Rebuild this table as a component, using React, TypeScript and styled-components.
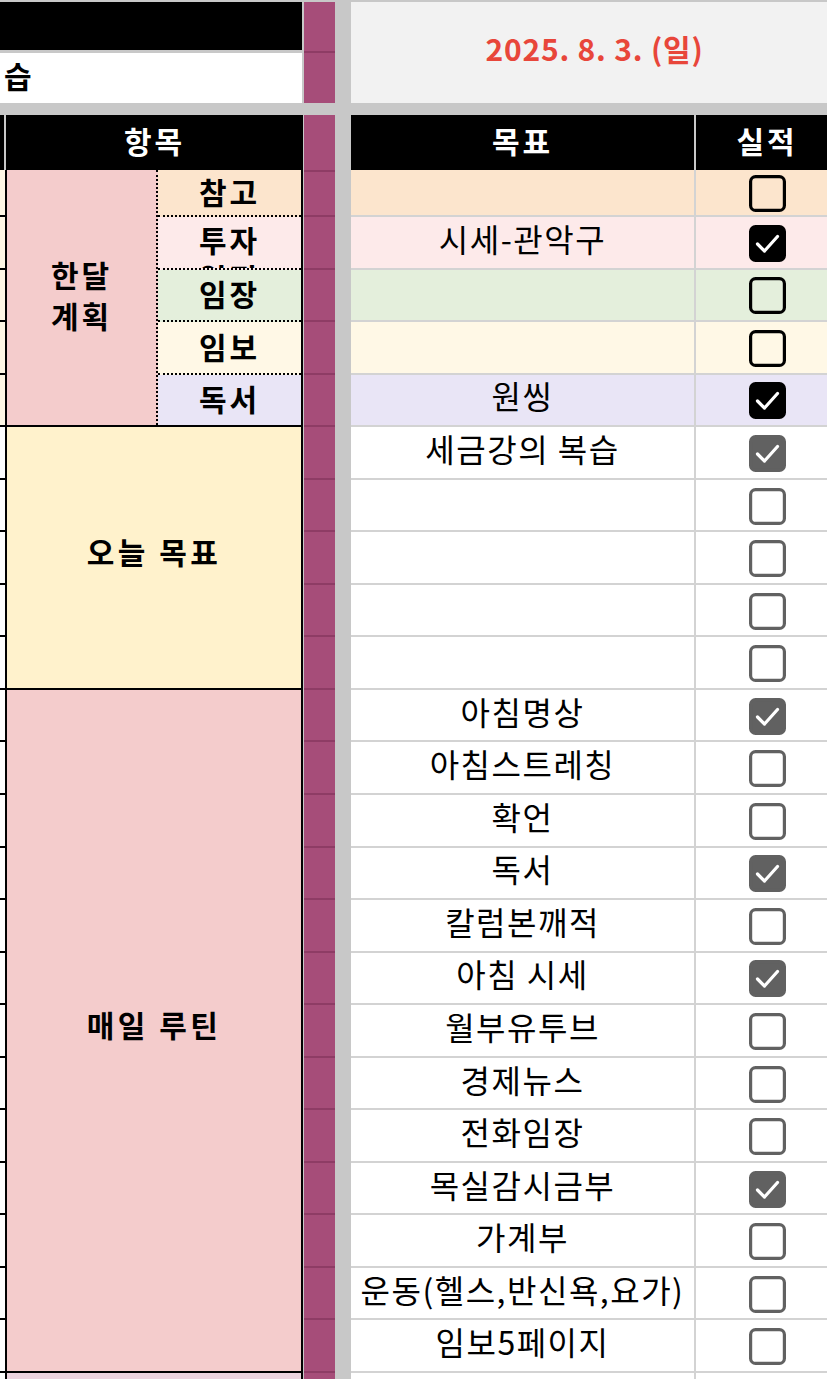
import React from "react";
import styled, { createGlobalStyle } from "styled-components";

const ROW = 52.55;
const FIRST = 47;
const GRID = "#d3d3d3";
const BG_GRAY = "#c8c8c8";
const FONT = `"Noto Sans CJK KR", "Noto Sans", sans-serif`;

const Global = createGlobalStyle`
  html, body { margin: 0; padding: 0; background: ${BG_GRAY}; overflow: hidden; }
  body { font-family: ${FONT}; color: #000; }
`;

const Page = styled.div`
  width: 827px;
  height: 1379px;
  overflow: hidden;
  box-sizing: border-box;
  padding-top: 2px;
  display: flex;
  align-items: flex-start;
  background: ${BG_GRAY};
`;

/* ---------- left panel ---------- */
const LeftPanel = styled.div`
  width: 303px;
  flex: none;
  display: flex;
  flex-direction: column;
`;

const BlackBar = styled.div`
  height: 48px;
  flex: none;
  margin-right: 1px;
  background: #000;
`;

const NoteRow = styled.div`
  height: 50px;
  flex: none;
  box-sizing: border-box;
  margin-top: 3px;
  margin-right: 1px;
  background: #fff;
  display: flex;
  align-items: center;
  padding: 0 0 7px 4px;
  font-size: 30px;
  font-weight: 700;
`;

const LeftHeader = styled.div`
  height: 55px;
  flex: none;
  margin-top: 12px;
  display: flex;
  gap: 2px;
`;

const HeadStrip = styled.div`
  width: 4px;
  flex: none;
  background: #000;
`;

const HeadCell = styled.div<{ $w?: number }>`
  ${(p) => (p.$w ? `width: ${p.$w}px; flex: none;` : "flex: 1;")}
  box-sizing: border-box;
  padding-bottom: 6px;
  background: #000;
  color: #fff;
  font-size: 30px;
  font-weight: 700;
  letter-spacing: 3px;
  display: flex;
  align-items: center;
  justify-content: center;
`;

const LeftBody = styled.div`
  flex: none;
  display: flex;
`;

const Strip = styled.div`
  width: 5px;
  flex: none;
  display: flex;
  flex-direction: column;
`;

const StripCell = styled.div<{ $h: number; $bg: string }>`
  height: ${(p) => p.$h}px;
  flex: none;
  box-sizing: border-box;
  background: ${(p) => p.$bg};
  border-bottom: 2px solid #000;
`;

const Sections = styled.div`
  flex: 1;
  display: flex;
  flex-direction: column;
  border-left: 2px solid #000;
  border-right: 2px solid #000;
`;

const MonthSection = styled.div`
  height: ${FIRST + 4 * ROW}px;
  flex: none;
  box-sizing: border-box;
  border-bottom: 2px solid #000;
  display: flex;
`;

const MonthLabel = styled.div`
  width: 151px;
  flex: none;
  background: #f4cccc;
  border-right: 2px dotted #000;
  display: flex;
  align-items: center;
  justify-content: center;
  text-align: center;
  white-space: pre-line;
  line-height: 41px;
  font-size: 30px;
  font-weight: 700;
  letter-spacing: 3px;
  padding-bottom: 6px;
  box-sizing: border-box;
`;

const SubList = styled.div`
  flex: 1;
  display: flex;
  flex-direction: column;
`;

const SubCell = styled.div<{ $h: number; $bg: string; $last?: boolean; $top?: boolean }>`
  height: ${(p) => p.$h}px;
  flex: none;
  box-sizing: border-box;
  background: ${(p) => p.$bg};
  border-bottom: ${(p) => (p.$last ? "none" : "2px dotted #000")};
  overflow: hidden;
  display: flex;
  flex-direction: column;
  align-items: center;
  justify-content: ${(p) => (p.$top ? "flex-start" : "center")};
  padding: ${(p) => (p.$top ? "3px 0 0" : "0 0 3px")};
  font-size: 30px;
  font-weight: 700;
  letter-spacing: 3px;
  line-height: 38px;
  white-space: pre-line;
  text-align: center;
`;

const BlockSection = styled.div<{ $h?: number; $bg: string }>`
  height: ${(p) => (p.$h ? `${p.$h}px` : "200px")};
  flex: none;
  box-sizing: border-box;
  padding-bottom: 14px;
  background: ${(p) => p.$bg};
  border-bottom: ${(p) => (p.$h ? "2px solid #000" : "none")};
  display: flex;
  align-items: center;
  justify-content: center;
  font-size: 30px;
  font-weight: 700;
  letter-spacing: 3.5px;
`;

/* ---------- purple column ---------- */
const PurplePanel = styled.div`
  width: 31px;
  margin-left: 1px;
  flex: none;
  display: flex;
  flex-direction: column;
`;

const PurpleCell = styled.div<{ $h: number; $gapTop?: boolean; $noLine?: boolean }>`
  height: ${(p) => p.$h}px;
  flex: none;
  box-sizing: border-box;
  margin-top: ${(p) => (p.$gapTop ? "12px" : "0")};
  background: #a64d79;
  border-bottom: ${(p) => (p.$noLine ? "none" : "2px solid #8e3c65")};
`;

/* ---------- right panel ---------- */
const RightPanel = styled.div`
  width: 487px;
  margin-left: 16px;
  flex: none;
  display: flex;
  flex-direction: column;
`;

const DateBox = styled.div`
  height: 101px;
  flex: none;
  box-sizing: border-box;
  padding-bottom: 9px;
  background: #f2f2f2;
  display: flex;
  align-items: center;
  justify-content: center;
  color: #e8463a;
  font-size: 30px;
  font-weight: 700;
  letter-spacing: 0.8px;
`;

const RightHeader = styled.div`
  height: 55px;
  margin-top: 12px;
  flex: none;
  display: flex;
  gap: 2px;
`;

const GoalRow = styled.div<{ $h: number; $bg: string }>`
  height: ${(p) => p.$h}px;
  flex: none;
  box-sizing: border-box;
  display: flex;
  background: ${(p) => p.$bg};
  border-bottom: 2px solid ${GRID};
`;

const GoalCell = styled.div`
  width: 343px;
  flex: none;
  border-right: 2px solid ${GRID};
  display: flex;
  align-items: center;
  justify-content: center;
  font-size: 32px;
  letter-spacing: 1.5px;
  white-space: nowrap;
  padding-bottom: 9px;
  box-sizing: content-box;
`;

const CheckCell = styled.div`
  flex: 1;
  display: flex;
  align-items: center;
  justify-content: center;
  padding-top: 2px;
`;

type Tone = "black" | "gray";

const CheckSvg = styled.svg`
  display: block;
  width: 37px;
  height: 37px;
`;

function CheckBox({ tone, checked }: { tone: Tone; checked: boolean }) {
  const c = tone === "black" ? "#000" : "#616161";
  return (
    <CheckSvg viewBox="0 0 37 37">
      <rect
        x="1.6"
        y="1.6"
        width="33.8"
        height="33.8"
        rx="5"
        fill={checked ? c : "none"}
        stroke={c}
        strokeWidth="3.2"
      />
      {checked && (
        <polyline
          points="8.5,19 15.5,26 28.5,11.5"
          fill="none"
          stroke="#fff"
          strokeWidth="3.2"
          strokeLinecap="round"
          strokeLinejoin="round"
        />
      )}
    </CheckSvg>
  );
}

type Item = { goal: string; checked: boolean };

const month = [
  { label: "참고", bg: "#fce5cd", goal: "", checked: false },
  { label: "투자\n일정", bg: "#fdeaea", goal: "시세-관악구", checked: true, top: true },
  { label: "임장", bg: "#e4efdc", goal: "", checked: false },
  { label: "임보", bg: "#fff8e6", goal: "", checked: false },
  { label: "독서", bg: "#e9e5f6", goal: "원씽", checked: true },
];

const today: Item[] = [
  { goal: "세금강의 복습", checked: true },
  { goal: "", checked: false },
  { goal: "", checked: false },
  { goal: "", checked: false },
  { goal: "", checked: false },
];

const routine: Item[] = [
  { goal: "아침명상", checked: true },
  { goal: "아침스트레칭", checked: false },
  { goal: "확언", checked: false },
  { goal: "독서", checked: true },
  { goal: "칼럼본깨적", checked: false },
  { goal: "아침 시세", checked: true },
  { goal: "월부유투브", checked: false },
  { goal: "경제뉴스", checked: false },
  { goal: "전화임장", checked: false },
  { goal: "목실감시금부", checked: true },
  { goal: "가계부", checked: false },
  { goal: "운동(헬스,반신욕,요가)", checked: false },
  { goal: "임보5페이지", checked: false },
];

const monthH = (i: number) => (i === 0 ? FIRST : ROW);
const bodyRows = [...today, ...routine];

export default function App() {
  return (
    <>
      <Global />
      <Page>
        <LeftPanel>
          <BlackBar />
          <NoteRow>습</NoteRow>
          <LeftHeader>
            <HeadStrip />
            <HeadCell>항목</HeadCell>
          </LeftHeader>
          <LeftBody>
            <Strip>
              {month.map((m, i) => (
                <StripCell key={"ms" + i} $h={monthH(i)} $bg="#fdf6e4" />
              ))}
              {bodyRows.map((_, i) => (
                <StripCell key={"bs" + i} $h={ROW} $bg="#fdfdfd" />
              ))}
              <StripCell $h={ROW} $bg="#fdfdfd" />
            </Strip>
            <Sections>
              <MonthSection>
                <MonthLabel>{"한달\n계획"}</MonthLabel>
                <SubList>
                  {month.map((m, i) => (
                    <SubCell
                      key={m.label}
                      $h={i === month.length - 1 ? ROW - 2 : monthH(i)}
                      $bg={m.bg}
                      $last={i === month.length - 1}
                      $top={m.top}
                    >
                      {m.label}
                    </SubCell>
                  ))}
                </SubList>
              </MonthSection>
              <BlockSection $h={5 * ROW} $bg="#fff2cc">
                오늘 목표
              </BlockSection>
              <BlockSection $h={13 * ROW} $bg="#f4cccc">
                매일 루틴
              </BlockSection>
              <BlockSection $bg="#ecd3de" />
            </Sections>
          </LeftBody>
        </LeftPanel>

        <PurplePanel>
          <PurpleCell $h={51} />
          <PurpleCell $h={50} $noLine />
          <PurpleCell $h={57} $gapTop />
          <PurpleCell $h={FIRST - 2} />
          {month.slice(1).map((_, i) => (
            <PurpleCell key={"pm" + i} $h={ROW} />
          ))}
          {bodyRows.map((_, i) => (
            <PurpleCell key={"pb" + i} $h={ROW} />
          ))}
          <PurpleCell $h={ROW} />
        </PurplePanel>

        <RightPanel>
          <DateBox>2025. 8. 3. (일)</DateBox>
          <RightHeader>
            <HeadCell $w={343}>목표</HeadCell>
            <HeadCell>실적</HeadCell>
          </RightHeader>
          {month.map((m, i) => (
            <GoalRow key={"mr" + i} $h={monthH(i)} $bg={m.bg}>
              <GoalCell>{m.goal}</GoalCell>
              <CheckCell>
                <CheckBox tone="black" checked={m.checked} />
              </CheckCell>
            </GoalRow>
          ))}
          {bodyRows.map((r, i) => (
            <GoalRow key={"br" + i} $h={ROW} $bg="#fff">
              <GoalCell>{r.goal}</GoalCell>
              <CheckCell>
                <CheckBox tone="gray" checked={r.checked} />
              </CheckCell>
            </GoalRow>
          ))}
          <GoalRow $h={ROW} $bg="#fff">
            <GoalCell />
            <CheckCell />
          </GoalRow>
        </RightPanel>
      </Page>
    </>
  );
}
